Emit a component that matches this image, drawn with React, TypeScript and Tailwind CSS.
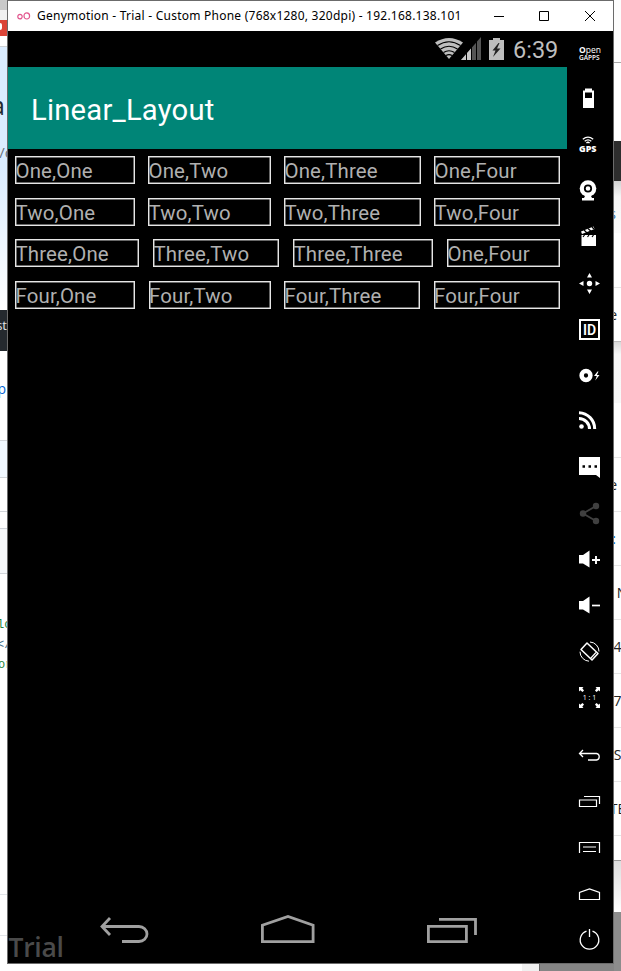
import type { ReactNode } from "react";

function Glyph({ children }: { children: ReactNode }) {
  return (
    <svg className="block h-6 w-6 shrink-0 overflow-visible" viewBox="0 0 24 24" fill="none" stroke="none">
      {children}
    </svg>
  );
}

function Slice({ className, children }: { className: string; children?: ReactNode }) {
  return <div className={"flex w-full shrink-0 items-center overflow-hidden whitespace-nowrap " + className}>{children}</div>;
}

function LeftBackdrop() {
  return (
    <div className="flex w-[7px] shrink-0 flex-col overflow-hidden bg-white font-['Open_Sans',sans-serif]">
      <Slice className="h-[10px] bg-[#c9c9c9]" />
      <Slice className="h-[10px] bg-[#f1f1f1]" />
      <Slice className="h-[16px] bg-[#db4437]"><span className="mb-[4px] h-[7px] w-[2px] rounded-r-full bg-white" /></Slice>
      <Slice className="h-[11px] border-b border-[#cfd2d4] bg-white" />
      <Slice className="h-[120px] flex-col items-end! bg-[#dbedff]">
        <span className="mt-[43px] mr-[2px] text-[25px] leading-[30px] text-[#24292e]">a</span>
        <span className="mt-[22px] -mr-[5px] text-[15px] leading-[20px] text-[#6a737d]">/c</span>
      </Slice>
      <Slice className="h-[143px] bg-linear-to-b from-[#dbedff] to-white" />
      <Slice className="h-[41px] items-start! justify-end bg-[#24292e] pt-[5px] text-[13px] leading-[20px] text-[#e1e4e8]">st</Slice>
      <Slice className="h-[90px] justify-end border-b border-[#d1d5da] pr-[1px] pb-[14px] text-[14px] text-[#0366d6]">p</Slice>
      <Slice className="h-[37px] border-b border-[#d1d5da] bg-[#f1f8ff]" />
      <Slice className="h-[34px] border-b border-[#d1d5da]" />
      <Slice className="h-[17px] border-b border-[#d1d5da]" />
      <Slice className="h-[45px] border-b border-[#d1d5da] bg-[#f6f8fa]" />
      <Slice className="mt-[41px] h-[20px] font-['Liberation_Mono',monospace] text-[12px] text-[#22863a]"><span className="-ml-[3px]">lc</span></Slice>
      <Slice className="h-[20px] font-['Liberation_Mono',monospace] text-[12px] text-[#44708a]"><span className="-ml-[3px]">&lt;/</span></Slice>
      <Slice className="h-[20px] font-['Liberation_Mono',monospace] text-[12px] text-[#22863a]"><span className="-ml-[2px]">or</span></Slice>
      <Slice className="h-[220px] border-b border-[#e1e4e8]" />
      <Slice className="h-[41px] border-b border-[#e1e4e8]" />
    </div>
  );
}

function RightBackdrop() {
  const row = "justify-center border-b border-[#e5e5e5] text-[14px] text-[#222]";
  return (
    <div className="flex w-[7px] shrink-0 flex-col overflow-hidden bg-white font-['Open_Sans',sans-serif]">
      <Slice className="h-[63px] border-b border-[#a8a8a8] bg-[#fdfdfd]" />
      <Slice className="h-[78px]" />
      <Slice className="h-[40px] bg-[#2d2d2d]" />
      <Slice className="h-[52px] justify-end bg-linear-to-b from-[#d2d2d2] via-[#f5f5f5] via-30% to-[#fbfbfb] pt-[13px] pr-[5px] text-[14px] text-[#3572b0]">s</Slice>
      <Slice className="h-[55px] border-b border-[#e5e5e5]" />
      <Slice className="h-[54px] justify-end border-b border-[#bbb] pr-[4px] text-[14px] text-[#222]">e</Slice>
      <Slice className="h-[61px] bg-linear-to-b from-[#d8d8d8] via-[#f7f7f7] via-20% to-[#f8f8f8]" />
      <Slice className="h-[55px] border-b border-[#e5e5e5]" />
      <Slice className="h-[54px] justify-end border-b border-[#e5e5e5] pr-[4px] text-[14px] text-[#222]">e</Slice>
      <Slice className="h-[54px] justify-end border-b border-[#e5e5e5] pr-[5px] text-[14px] text-[#0366d6]">:</Slice>
      <Slice className={"h-[54px] pl-[8px] " + row}>N</Slice>
      <Slice className={"h-[54px] " + row}>4</Slice>
      <Slice className={"h-[54px] " + row}>7</Slice>
      <Slice className={"h-[54px] " + row}>S</Slice>
      <Slice className={"h-[54px] " + row}>TE</Slice>
      <Slice className="h-[25px] border-b border-[#999]" />
      <Slice className="h-[51px] bg-linear-to-b from-[#dedede] to-white" />
      <Slice className="h-[59px] bg-[#8c8c8c]" />
    </div>
  );
}

function TitleBar() {
  return (
    <header className="flex h-[30px] shrink-0 items-center bg-white pl-[9px]">
      <svg className="h-2 w-[14px] shrink-0" viewBox="0 0 14 8" fill="none" stroke="#e2568e" strokeWidth="1.2">
        <ellipse cx="3" cy="4.6" rx="2.2" ry="2.3" />
        <ellipse cx="9.8" cy="3.9" rx="2.8" ry="3.1" />
      </svg>
      <span className="ml-[6px] w-[440px] whitespace-nowrap font-['Noto_Sans',sans-serif] text-[12px] tracking-[0.235px] text-black">
        Genymotion - Trial - Custom Phone (768x1280, 320dpi) - 192.168.138.101
      </span>
      <svg className="ml-[17px] h-3 w-[103px]" viewBox="0 0 103 12" fill="none" stroke="#000" strokeWidth="1">
        <path d="M0 6.5h10M45.500 1.500h9v9h-9zM91 1l10 10M101 1l-10 10" />
      </svg>
    </header>
  );
}

function StatusBar() {
  return (
    <div className="flex h-[36px] shrink-0 items-center justify-end pr-[8px]">
      <svg className="h-6 w-[72px]" viewBox="0 0 72 24">
        <path d="M0 5.500Q14 -3.500 28 5.500L14 22z" fill="#bebebe" />
        <g fill="none" stroke="#000" strokeWidth="1.200">
          <path d="M2.500 8.500Q14 1 25.500 8.500M5.500 12Q14 6.500 22.500 12M8.500 15.500Q14 12 19.500 15.500M11 18.600Q14 16.500 17 18.600" />
        </g>
        <path d="M26 23L46 0v23z" fill="#555" />
        <path d="M26 23L36 11.500V23z" fill="#c8c8c8" />
        <path d="M31.500 15v8M36.500 10v13M41.500 4v19" stroke="#000" strokeWidth="1" />
        <path d="M54 3h4V1h7v2h4v20H54z" fill="#bebebe" />
        <path d="M63.500 6l-6 7.500h3L58 20l7.500-8.500h-3.500l2.500-5.500z" fill="#222" />
      </svg>
      <span className="mt-[2px] ml-[6px] w-[46px] whitespace-nowrap font-['Roboto',sans-serif] text-[23.5px] leading-6 text-[#bebebe]">6:39</span>
    </div>
  );
}

function Cell({ className, children }: { className: string; children: ReactNode }) {
  return (
    <div className={"h-[28px] shrink-0 border border-[#e6e6e6] font-['Roboto',sans-serif] text-[20.4px] leading-[28px] tracking-[0.16px] whitespace-nowrap text-[#b0b0b0] shadow-[inset_0_0_0_0.5px_#d0d0d0] " + className}>
      <span className="-ml-[0.5px]">{children}</span>
    </div>
  );
}

function TextGrid() {
  return (
    <div className="flex flex-1 flex-col gap-[13.5px] pt-[7px] pl-[7px]">
      <div className="flex gap-[13px]">
        <Cell className="w-[120px]">One,One</Cell>
        <Cell className="w-[123px]">One,Two</Cell>
        <Cell className="w-[137px]">One,Three</Cell>
        <Cell className="w-[126px]">One,Four</Cell>
      </div>
      <div className="flex gap-[13px]">
        <Cell className="w-[120px]">Two,One</Cell>
        <Cell className="w-[123px]">Two,Two</Cell>
        <Cell className="w-[137px]">Two,Three</Cell>
        <Cell className="w-[126px]">Two,Four</Cell>
      </div>
      <div className="flex gap-[14px]">
        <Cell className="w-[124px]">Three,One</Cell>
        <Cell className="w-[126px]">Three,Two</Cell>
        <Cell className="w-[140px]">Three,Three</Cell>
        <Cell className="w-[113px]">One,Four</Cell>
      </div>
      <div className="flex gap-[13.5px]">
        <Cell className="w-[120px]">Four,One</Cell>
        <Cell className="w-[122px]">Four,Two</Cell>
        <Cell className="w-[136px]">Four,Three</Cell>
        <Cell className="w-[126px]">Four,Four</Cell>
      </div>
    </div>
  );
}

function NavBar() {
  return (
    <nav className="relative flex h-[70px] shrink-0 items-start pl-[92px]">
      <svg className="mt-[21px] h-[30px] w-[50px]" viewBox="0 0 50 30" fill="none" stroke="#a0a0a0" strokeWidth="2.800">
        <path d="M10 4L2 12.500L10 21M2.500 12.500H39a8 7.500 0 0 1 0 15H22" />
      </svg>
      <svg className="mt-[21px] ml-[111px] h-[30px] w-[54px]" viewBox="0 0 54 30" fill="none" stroke="#a0a0a0" strokeWidth="2.800">
        <path d="M1.400 27.600V11.300L27 2.500l25.100 8.800v16.300z" />
      </svg>
      <svg className="mt-[21px] ml-[112px] h-[30px] w-[50px]" viewBox="0 0 50 30" fill="none" stroke="#a0a0a0" strokeWidth="2.800">
        <path d="M1.400 12.400h38v15.200h-38zM12 5.400h36.500V21" />
      </svg>
      <span className="absolute bottom-0 left-[0.5px] font-['Open_Sans',sans-serif] text-[26.5px] leading-[32px] font-semibold tracking-[-0.3px] text-[#4a4a4a]">Trial</span>
    </nav>
  );
}

function ToolRail() {
  return (
    <aside className="flex w-[46px] shrink-0 flex-col gap-[22px] bg-black pt-[10px] pl-[10px]">
      <div className="flex h-6 w-6 shrink-0 flex-col items-start pt-[4px] pl-[2px] font-['Open_Sans',sans-serif] text-white">
        <span className="text-[8.5px] leading-[9px]"><b>O</b>pen</span>
        <span className="text-[6.5px] leading-[7px] font-semibold">GAPPS</span>
      </div>
      <Glyph>
        <path fill="#fff" fillRule="evenodd" d="M8 1.500h7V3.500h2v17.500H6V3.500h2zM8 5.500v5.500h7V5.500z" />
      </Glyph>
      <div className="flex h-6 w-6 shrink-0 flex-col items-start pt-[3px] pl-[2px]">
        <svg className="ml-[3px] h-2 w-3" viewBox="0 0 12 8" fill="none" stroke="#fff" strokeWidth="1.300">
          <path d="M.8 3.200Q6-1 11.200 3.200M2.700 5.200Q6 2.500 9.300 5.200M4.400 6.900Q6 5.600 7.600 6.900" />
        </svg>
        <span className="font-['Open_Sans',sans-serif] text-[9px] leading-[9px] font-extrabold text-white">GPS</span>
      </div>
      <Glyph>
        <circle cx="11" cy="9.500" r="8.300" fill="#fff" />
        <circle cx="11" cy="9.500" r="3.200" stroke="#000" strokeWidth="1.800" />
        <path d="M8 17h6l1 2h2v2.500H5V19h2z" fill="#fff" />
      </Glyph>
      <Glyph>
        <path d="M4.500 10H19v11H4.500zM4 6.500L16.500 1.500l1 2.500L5 9z" fill="#fff" />
        <path d="M7 5l3 3M11 3.500l3 2.800M15 2l2 2M7.500 10l-1.500 2M12 10l-1.500 2M16.500 10l-1.500 2" stroke="#000" strokeWidth="1.200" />
      </Glyph>
      <Glyph>
        <g fill="#fff"><circle cx="12.500" cy="12.500" r="2.700" /><path d="M12.500 2L15 6.500h-5zM12.500 23l-2.500-4.500h5zM2 12.500l4.500-2.500v5zM23 12.500l-4.500-2.500v5z" /></g>
      </Glyph>
      <div className="mt-[2px] mr-auto mb-[1px] ml-[2px] flex h-[21px] w-[21px] shrink-0 items-center justify-center border-2 border-white font-['Roboto',sans-serif] text-[14px] leading-none font-semibold text-white">
        ID
      </div>
      <Glyph>
        <circle cx="9" cy="12.500" r="4.400" stroke="#fff" strokeWidth="4.500" />
        <path d="M20.500 8.500L17 13h2.800l-1.600 4.500L22.500 12h-2.600l1.600-3.500z" fill="#fff" />
      </Glyph>
      <Glyph>
        <circle cx="4.500" cy="17.500" r="2.300" fill="#fff" />
        <path d="M2 9.500a10.500 10.500 0 0 1 10.500 10.500M2 3.700a16.200 16.200 0 0 1 15.700 16.300" stroke="#fff" strokeWidth="3" />
      </Glyph>
      <Glyph>
        <path fill="#fff" d="M2 2h21v21l-4-3H2z" />
        <path d="M5.500 11.500h2.500M11.500 11.500H14M17.500 11.500H20" stroke="#000" strokeWidth="2.500" />
      </Glyph>
      <Glyph>
        <g fill="#404040"><circle cx="6" cy="12.500" r="3.200" /><circle cx="19" cy="5" r="3.200" /><circle cx="19" cy="20" r="3.200" /></g>
        <path d="M19 5L6 12.500L19 20" stroke="#404040" strokeWidth="1.800" />
      </Glyph>
      <Glyph>
        <path fill="#fff" d="M2 8h4l6.500-4.500v17L6 16.500H2z" /><path d="M15 13h8M19 9v8" stroke="#fff" strokeWidth="1.900" />
      </Glyph>
      <Glyph>
        <path fill="#fff" d="M2 8h4l6.500-4.500v17L6 16.500H2z" /><path d="M15 12.500h8" stroke="#fff" strokeWidth="1.700" />
      </Glyph>
      <Glyph>
        <path d="M4 10.500L10 4L21 14.500L15 21z" stroke="#fff" strokeWidth="1.500" strokeLinejoin="round" />
        <path d="M13 3a9.500 9.500 0 0 1 9 9.500M12 22.200a9.500 9.500 0 0 1-9-9.500" stroke="#fff" strokeWidth="1" />
        <path d="M13.500 19.500l5.500-6" stroke="#fff" strokeWidth="1.200" />
      </Glyph>
      <div className="relative h-6 w-6 shrink-0">
        <Glyph>
          <path fill="#fff" d="M2 2h4.500L5.300 3.300L7 5.500L5.500 7L3.300 5.300L2 6.500zM23 2h-4.500l1.200 1.300L18 5.500L19.500 7l2.200-1.700L23 6.500zM2 23h4.500l-1.200-1.300L7 19.500L5.500 18l-2.200 1.700L2 18.500zM23 23h-4.500l1.200-1.300L18 19.500l1.500-1.500l2.200 1.700l1.300-1.200z" />
        </Glyph>
        <span className="absolute inset-0 pl-[1px] text-center font-['Open_Sans',sans-serif] text-[7px] leading-[25px] whitespace-nowrap text-white">1 : 1</span>
      </div>
      <div className="mt-3 flex flex-col gap-[22px]">
        <Glyph><path d="M6 7L2.500 10.500L6 14M2.500 10.500H19.500a3.300 3.300 0 0 1 0 6.500H11" stroke="#fff" strokeWidth="1.300" /></Glyph>
        <Glyph><path d="M2.500 11h17v6.500h-17zM7 7.500h15.500V15" stroke="#fff" strokeWidth="1.200" /></Glyph>
        <Glyph><path d="M2.500 18V7.500h20V18M6 12h13M6 16.500h13" stroke="#fff" strokeWidth="1.200" /></Glyph>
        <Glyph><path d="M2.500 18.500V11.500L12.500 8l10 3.500v7z" stroke="#fff" strokeWidth="1.200" /></Glyph>
        <Glyph><path d="M9.500 4.100a9.300 9.300 0 1 0 6 0M12.500 2v8" stroke="#fff" strokeWidth="1.300" /></Glyph>
      </div>
    </aside>
  );
}

export default function App() {
  return (
    <div className="flex h-[971px] w-[621px] overflow-hidden bg-white">
      <LeftBackdrop />
      <div className="flex w-[607px] shrink-0 flex-col">
        <main className="flex h-[964px] flex-col border border-[#6b6b6b] bg-black">
          <TitleBar />
          <div className="flex min-h-0 flex-1">
            <section className="flex w-[559px] shrink-0 flex-col bg-black">
              <StatusBar />
              <div className="flex h-[82px] shrink-0 items-center bg-[#008577] pt-[5px] pl-[23px] font-['Roboto',sans-serif] text-[29.2px] tracking-[0.22px] text-white">
                Linear_Layout
              </div>
              <TextGrid />
              <NavBar />
            </section>
            <ToolRail />
          </div>
        </main>
        <footer className="flex h-[7px] justify-end bg-white">
          <span className="w-[17px] bg-[#f0f0f0]" />
          <span className="w-[75px] border-l border-[#666] bg-[#858585]" />
        </footer>
      </div>
      <RightBackdrop />
    </div>
  );
}
